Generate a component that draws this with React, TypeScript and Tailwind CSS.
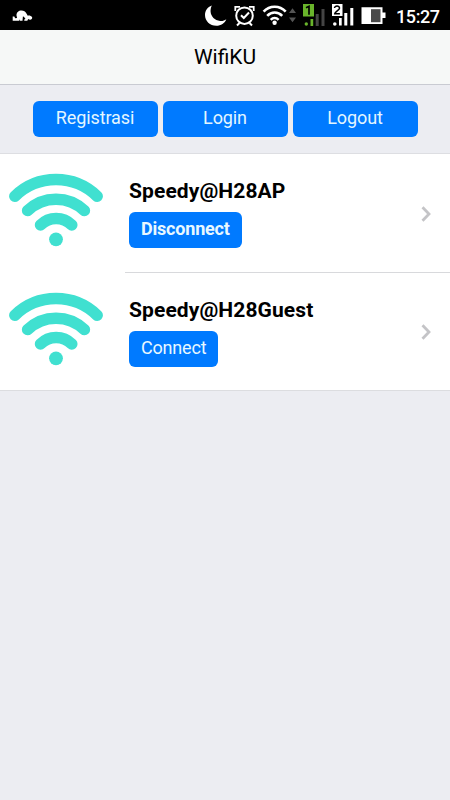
import React from "react";

const networks = [
  { ssid: "Speedy@H28AP", connected: true },
  { ssid: "Speedy@H28Guest", connected: false },
];

const tabs = ["Registrasi", "Login", "Logout"];

const StatusBar = () => {
  return (
    <div className="h-[30px] bg-black shrink-0">
      <svg width="450" height="30" viewBox="0 0 450 30" fill="none">
        {/* kneeling figure */}
        <path
          d="M12.700 20.800v-4.300h1.600l.9 1.700 1.900-.2-.6-2.500c-.2-3 2.200-5 4.900-5 2.500 0 4 1 5.200 3.200l1.200 2c.8-.4 2-.3 2.800.2 1.600.3 2 1.900 1.300 2.900-.8 1.200-2.500 1.200-3.700.3l-.9 1.700h-3l-.1-1.200 1.300-.5-1.600-2.300-1-.4-.4 4.400h-2.500l-.2-1.500-.6 1.500z"
          fill="#fff"
        />
        {/* moon */}
        <path
          d="M211.800 5.500C207.500 7 205 10.800 205 15c0 6 5 10.800 11.300 10.800 4.600 0 8.600-2.600 10-6.500-2 1.400-4 2-6.200 1.700-5.300-.6-9.200-4.500-9.500-9.200-.1-2.300.3-4.300 1.200-6.300z"
          fill="#fff"
        />
        {/* alarm */}
        <circle cx="244.500" cy="15.700" r="8.300" stroke="#fff" strokeWidth="2" />
        <path
          d="M241 15.200l2.800 2.800 5.200-5.500M239.500 23l-2.500 2.500M249.500 23l2.500 2.500"
          stroke="#fff"
          strokeWidth="2"
        />
        <path
          d="M235.300 11v-4.200h4.700M253.700 11v-4.200h-4.700"
          stroke="#fff"
          strokeWidth="1.800"
        />
        {/* wifi */}
        <path
          d="M263.600 11.700c6.100-6.700 16-6.700 22.100 0M267.200 15.900c4.300-4.500 10.700-4.500 15 0M270.700 19.800c2.400-2.400 5.500-2.400 7.900 0"
          stroke="#fff"
          strokeWidth="2.600"
        />
        <circle cx="274.600" cy="22.700" r="2.200" fill="#fff" />
        <path d="M289 13l3.500-4.800 3.500 4.800zM289 17.500h7l-3.500 4.800z" fill="#555" />
        {/* sim 1 */}
        <rect x="303" y="4" width="11" height="12.500" fill="#69b42b" />
        <path d="M306 7.800l3-1.500v8.500" stroke="#000" strokeWidth="1.700" />
        <circle cx="306.300" cy="24" r="1.700" fill="#69b42b" />
        <path d="M310.500 19h2.700v7h-2.700z" fill="#69b42b" />
        <path d="M315.700 14h3v12h-3zM321.500 9h3v17h-3z" fill="#444" />
        {/* sim 2 */}
        <rect x="332" y="4" width="10.500" height="12" fill="#fff" />
        <path
          d="M334.500 8c0-2.600 5.200-2.600 5 .2 0 1.800-4.800 3.600-4.800 5.600h5.200"
          stroke="#000"
          strokeWidth="1.500"
        />
        <circle cx="334.800" cy="24" r="1.800" fill="#fff" />
        <path d="M339 18h2.700v7.500h-2.700zM344.300 13h3v12.500h-3zM350.300 8h3v17.500h-3z" fill="#fff" />
        {/* battery */}
        <path d="M361.500 7.300h21v5.200h3v5.500h-3v6h-21z" fill="#fff" />
        <path d="M371 9.200h9.500v13h-9.500z" fill="#4a4a4a" />
        <text
          x="396"
          y="22.500"
          fill="#fff"
          fontSize="18"
          fontWeight="500"
          textLength="44"
          fontFamily="Roboto, sans-serif"
        >
          15:27
        </text>
      </svg>
    </div>
  );
};

const WifiLogo = () => {
  return (
    <svg
      className="mt-[18px] ml-2 shrink-0"
      width="96"
      height="76"
      viewBox="8 172 96 76"
      fill="none"
      stroke="#40e0d0"
      strokeWidth="11.500"
      strokeLinecap="round"
    >
      <path d="M14.800 196.300A59 59 0 0 1 97.200 196.300" />
      <path d="M27.600 210.600A41 41 0 0 1 84.400 210.600" />
      <path d="M40.500 225A22 22 0 0 1 71.800 225" />
      <circle cx="56" cy="239.300" r="6.900" fill="#40e0d0" stroke="none" />
    </svg>
  );
};

const Chevron = () => {
  return (
    <svg className="mr-[18px] mt-px shrink-0" width="12" height="18" viewBox="0 0 12 18" fill="none">
      <path d="M2.500 2.200L9 9l-6.500 6.800" stroke="#c4c4c7" strokeWidth="2.800" />
    </svg>
  );
};

const App = () => {
  return (
    <div className="min-h-screen w-full flex flex-col bg-[#ecedf2] text-black font-[Roboto,sans-serif]">
      <StatusBar />
      <header className="h-[55px] shrink-0 flex items-center justify-center bg-[#f6f8f7] border-b border-[#c9cbd2]">
        <h1 className="text-[21px] leading-6 font-normal">WifiKU</h1>
      </header>

      <div className="h-[69px] shrink-0 flex gap-[5px] pt-4 px-[32.5px] border-b border-[#dddee2]">
        {tabs.map((tab) => (
          <button
            key={tab}
            className="flex-1 h-9 pb-[3px] rounded-[6px] bg-[#007aff] text-[#e3f6ff] text-[18px] leading-6 tracking-[-0.1px]"
          >
            {tab}
          </button>
        ))}
      </div>

      <ul className="bg-white border-b border-[#dcdde0]">
        {networks.map((network, i) => (
          <li key={network.ssid} className="flex h-[117px] first:h-[119px]">
            <WifiLogo />
            <div
              className={`flex flex-1 items-center ml-[21px] pl-1 ${
                i === 0 ? "border-b border-[#d8d9dc]" : ""
              }`}
            >
              <div className="flex-1 h-full pt-[25px]">
                <h2 className="text-[21px] leading-6 font-bold tracking-[0.1px]">
                  {network.ssid}
                </h2>
                <button
                  className={`mt-[9px] h-9 px-3 pb-[3px] rounded-[6px] bg-[#007aff] text-[#e8f8ff] text-[18px] leading-6 tracking-[-0.2px] ${
                    network.connected ? "font-bold" : ""
                  }`}
                >
                  {network.connected ? "Disconnect" : "Connect"}
                </button>
              </div>
              <Chevron />
            </div>
          </li>
        ))}
      </ul>
    </div>
  );
};

export default App;
